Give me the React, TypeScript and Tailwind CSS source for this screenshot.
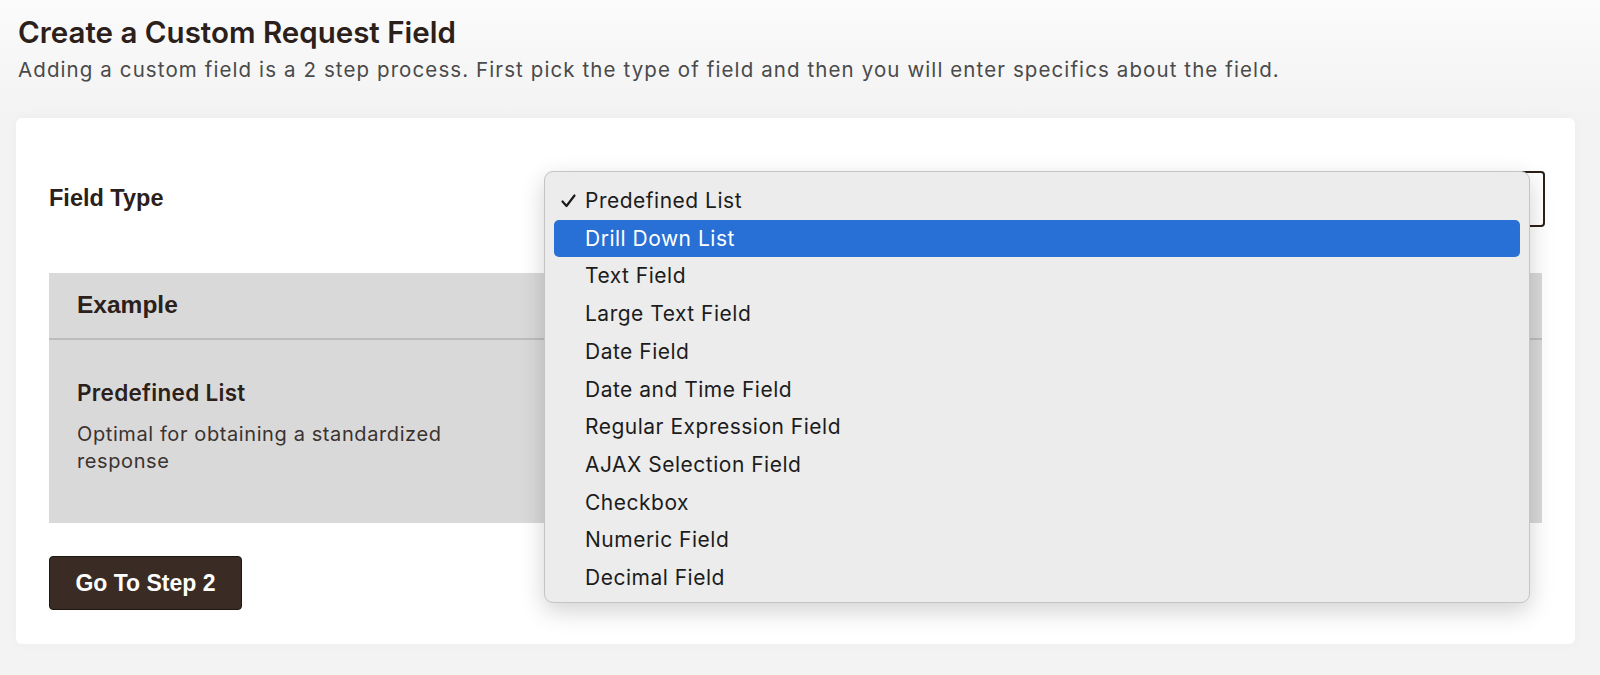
import { useState } from 'react'

const fieldTypes = [
  'Predefined List',
  'Drill Down List',
  'Text Field',
  'Large Text Field',
  'Date Field',
  'Date and Time Field',
  'Regular Expression Field',
  'AJAX Selection Field',
  'Checkbox',
  'Numeric Field',
  'Decimal Field',
]

function CheckMark() {
  return (
    <svg width="15" height="14" viewBox="0 0 15 14" fill="none">
      <path d="M1.5 7.5 L5.5 12 L13.5 1.5" stroke="#1a1a1a" strokeWidth="2.2" strokeLinecap="round" strokeLinejoin="round" />
    </svg>
  )
}

export default function App() {
  const [selected] = useState('Predefined List')
  const [hovered, setHovered] = useState('Drill Down List')

  return (
    <div className="min-h-[675px] bg-gradient-to-b from-[#fbfbfb] to-[#f3f3f3] to-[110px] font-['Inter',sans-serif] text-[#2b201a]">
      {/* Header */}
      <div className="px-[18px] pt-[14px]">
        <h1 className="text-[29.5px] leading-[36px] font-semibold">Create a Custom Request Field</h1>
        <p className="mt-[5px] text-[20.5px] leading-[30px] tracking-[1.1px] text-[#4a4a4a]">
          Adding a custom field is a 2 step process. First pick the type of field and then you will enter specifics about the field.
        </p>
      </div>

      {/* Card */}
      <div className="relative ml-[16px] mr-[25px] mt-[33px] rounded-[6px] bg-white pt-[53px] pl-[33px] pr-[30px] pb-[34px] shadow-[0_0_12px_rgba(0,0,0,0.03)]">
        <div className="flex h-[56px] items-center">
          <div className="w-[506px] font-['Liberation_Sans',sans-serif] text-[23.5px] font-bold">Field Type</div>
          <div className="h-full flex-1 rounded-[4px] border-2 border-[#2b201a] bg-white" />
        </div>

        <div className="mt-[46px] mr-[3px] bg-[#d9d9d9]">
          <div className="flex h-[67px] items-center border-b-2 border-[#bdbdbd] px-[28px] font-['Liberation_Sans',sans-serif] text-[24.5px] font-bold">
            Example
          </div>
          <div className="h-[183px] px-[28px] pt-[39px]">
            <div className="text-[22.5px] leading-[28px] font-semibold tracking-[0.3px]">Predefined List</div>
            <p className="mt-[14px] w-[400px] text-[20px] leading-[27px] tracking-[0.6px] text-[#3a3330]">
              Optimal for obtaining a standardized response
            </p>
          </div>
        </div>

        <button className="mt-[33px] flex h-[54px] w-[193px] items-center justify-center rounded-[4px] border border-[#1f1712] bg-[#3a2c24] font-['Liberation_Sans',sans-serif] text-[23px] font-bold text-white">
          Go To Step 2
        </button>

        {/* Open select menu */}
        <div className="absolute left-[528px] top-[53px] h-[432px] w-[986px] rounded-[9px] border border-[#c4c4c4] bg-[#ececec] pt-[10px] shadow-[0_8px_24px_rgba(0,0,0,0.18)]">
          {fieldTypes.map((t) => {
            const active = t === hovered
            return (
              <div key={t} className="h-[37.7px] px-[9px]" onMouseEnter={() => setHovered(t)}>
                <div
                  className={`flex h-full items-center rounded-[5px] pl-[7px] text-[21px] tracking-[0.5px] ${
                    active ? 'bg-[#2870d6] text-white' : 'text-[#1c1c1c]'
                  }`}
                >
                  <span className="flex w-[24px] items-center">{t === selected && <CheckMark />}</span>
                  <span>{t}</span>
                </div>
              </div>
            )
          })}
        </div>
      </div>
    </div>
  )
}
